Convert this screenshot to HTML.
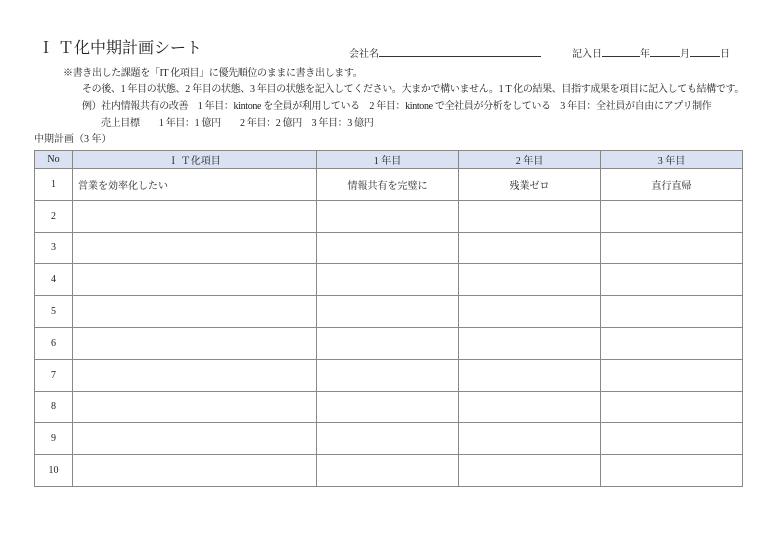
<!DOCTYPE html>
<html><head><meta charset="utf-8"><style>
body{margin:0;width:768px;height:550px;background:#fff;position:relative;font-family:"Liberation Serif","Noto Serif CJK SC",serif;color:#222;}
.a{position:absolute;white-space:nowrap;font-size:10px;line-height:12px;}
.t{letter-spacing:-0.35px;}
table{position:absolute;left:34px;top:150px;border-collapse:collapse;font-size:10px;}
td{border:1px solid #888;text-align:center;padding:0;height:30.8px;}
tr.h td{background:#d9e1f2;height:17px;}
td.l{text-align:left;padding-left:5px;}
</style></head><body>
<div class="a" style="left:38px;top:39px;font-size:16px;line-height:20px;">Ｉ Ｔ化中期計画シート</div>
<div class="a" style="left:349px;top:46px;">会社名<span style="display:inline-block;width:162px;border-bottom:1px solid #333;height:10px;"></span></div>
<div class="a" style="left:572px;top:46px;">記入日<span style="display:inline-block;width:38px;border-bottom:1px solid #333;height:10px;"></span>年<span style="display:inline-block;width:30px;border-bottom:1px solid #333;height:10px;"></span>月<span style="display:inline-block;width:30px;border-bottom:1px solid #333;height:10px;"></span>日</div>
<div class="a t" style="left:63px;top:68px;">※書き出した課題を「IT 化項目」に優先順位のままに書き出します。</div>
<div class="a t" style="left:82px;top:84px;">その後、1 年目の状態、2 年目の状態、3 年目の状態を記入してください。大まかで構いません。1 T 化の結果、目指す成果を項目に記入しても結構です。</div>
<div class="a t" style="left:82px;top:101px;">例）社内情報共有の改善　1 年目：kintone を全員が利用している　2 年目：kintone で全社員が分析をしている　3 年目：全社員が自由にアプリ制作</div>
<div class="a t" style="left:101px;top:118px;">売上目標　　1 年目：1 億円　　2 年目：2 億円　3 年目：3 億円</div>
<div class="a" style="left:34px;top:134px;">中期計画（3 年）</div>
<table>
<tr class="h"><td style="width:37px">No</td><td style="width:243px">Ｉ Ｔ化項目</td><td style="width:141px">1 年目</td><td style="width:141px">2 年目</td><td style="width:141px">3 年目</td></tr>
<tr><td>1</td><td class="l">営業を効率化したい</td><td>情報共有を完璧に</td><td>残業ゼロ</td><td>直行直帰</td></tr>
<tr><td>2</td><td></td><td></td><td></td><td></td></tr>
<tr><td>3</td><td></td><td></td><td></td><td></td></tr>
<tr><td>4</td><td></td><td></td><td></td><td></td></tr>
<tr><td>5</td><td></td><td></td><td></td><td></td></tr>
<tr><td>6</td><td></td><td></td><td></td><td></td></tr>
<tr><td>7</td><td></td><td></td><td></td><td></td></tr>
<tr><td>8</td><td></td><td></td><td></td><td></td></tr>
<tr><td>9</td><td></td><td></td><td></td><td></td></tr>
<tr><td>10</td><td></td><td></td><td></td><td></td></tr>
</table>
</body></html>
